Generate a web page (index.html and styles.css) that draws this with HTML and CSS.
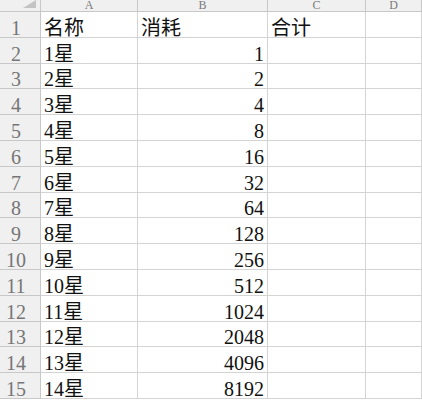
FILE: index.html
```html
<!DOCTYPE html>
<html lang="zh-CN">
<head>
    <meta charset="UTF-8">
    <meta name="viewport" content="width=device-width, initial-scale=1.0">
    <title>星级消耗</title>
    <link rel="stylesheet" href="styles.css">
</head>
<body>
    <div class="sheet">
        <div class="corner"><span class="select-all"></span></div>
        <div class="col-head">A</div>
        <div class="col-head">B</div>
        <div class="col-head">C</div>
        <div class="col-head">D</div>

        <div class="row-head">1</div>
        <div class="cell">名称</div>
        <div class="cell">消耗</div>
        <div class="cell">合计</div>
        <div class="cell"></div>

        <div class="row-head">2</div>
        <div class="cell">1星</div>
        <div class="cell num">1</div>
        <div class="cell"></div>
        <div class="cell"></div>

        <div class="row-head">3</div>
        <div class="cell">2星</div>
        <div class="cell num">2</div>
        <div class="cell"></div>
        <div class="cell"></div>

        <div class="row-head">4</div>
        <div class="cell">3星</div>
        <div class="cell num">4</div>
        <div class="cell"></div>
        <div class="cell"></div>

        <div class="row-head">5</div>
        <div class="cell">4星</div>
        <div class="cell num">8</div>
        <div class="cell"></div>
        <div class="cell"></div>

        <div class="row-head">6</div>
        <div class="cell">5星</div>
        <div class="cell num">16</div>
        <div class="cell"></div>
        <div class="cell"></div>

        <div class="row-head">7</div>
        <div class="cell">6星</div>
        <div class="cell num">32</div>
        <div class="cell"></div>
        <div class="cell"></div>

        <div class="row-head">8</div>
        <div class="cell">7星</div>
        <div class="cell num">64</div>
        <div class="cell"></div>
        <div class="cell"></div>

        <div class="row-head">9</div>
        <div class="cell">8星</div>
        <div class="cell num">128</div>
        <div class="cell"></div>
        <div class="cell"></div>

        <div class="row-head">10</div>
        <div class="cell">9星</div>
        <div class="cell num">256</div>
        <div class="cell"></div>
        <div class="cell"></div>

        <div class="row-head">11</div>
        <div class="cell">10星</div>
        <div class="cell num">512</div>
        <div class="cell"></div>
        <div class="cell"></div>

        <div class="row-head">12</div>
        <div class="cell">11星</div>
        <div class="cell num">1024</div>
        <div class="cell"></div>
        <div class="cell"></div>

        <div class="row-head">13</div>
        <div class="cell">12星</div>
        <div class="cell num">2048</div>
        <div class="cell"></div>
        <div class="cell"></div>

        <div class="row-head">14</div>
        <div class="cell">13星</div>
        <div class="cell num">4096</div>
        <div class="cell"></div>
        <div class="cell"></div>

        <div class="row-head">15</div>
        <div class="cell">14星</div>
        <div class="cell num">8192</div>
        <div class="cell"></div>
        <div class="cell"></div>
    </div>
</body>
</html>
```

FILE: styles.css
```css
body {
    margin: 0;
    background-color: #ffffff;
    overflow: hidden;
}
.sheet {
    display: grid;
    grid-template-columns: 41px 97px 130px 98px 56px;
    grid-template-rows: 12px repeat(15, 25.8px);
    font-family: 'Liberation Serif', 'Noto Sans CJK SC', serif;
    font-size: 20px;
    color: #111111;
}
.corner, .col-head, .row-head, .cell {
    box-sizing: border-box;
    border-right: 1px solid #d4d4d4;
    border-bottom: 1px solid #d4d4d4;
    white-space: nowrap;
}
.corner {
    background-color: #f0f0f0;
    border-color: #c8c8c8;
    display: flex;
    justify-content: flex-end;
    align-items: flex-end;
    padding: 0 4px 3px 0;
}
.select-all {
    width: 0;
    height: 0;
    border-left: 13px solid transparent;
    border-bottom: 8px solid #c4c4c4;
}
.col-head {
    background-color: #f0f0f0;
    border-color: #c8c8c8;
    color: #7a7a7a;
    font-size: 12px;
    line-height: 11px;
    text-align: center;
}
.row-head {
    background-color: #f0f0f0;
    border-color: #c8c8c8;
    color: #767676;
    display: flex;
    justify-content: center;
    align-items: flex-end;
    padding-right: 8px;
    line-height: 18px;
}
.cell {
    display: flex;
    align-items: flex-end;
    padding: 0 3px;
    line-height: 18px;
}
.num {
    justify-content: flex-end;
}
```
